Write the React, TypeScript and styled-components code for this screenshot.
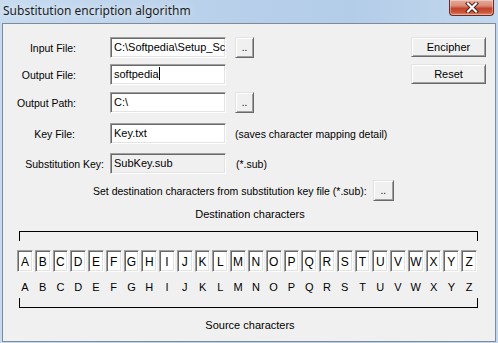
import React from "react";
import styled, { createGlobalStyle, css } from "styled-components";

const Global = createGlobalStyle`
  html, body { margin: 0; padding: 0; }
  body { width: 498px; height: 343px; overflow: hidden; background: #b9d1ea; }
  * { box-sizing: border-box; }
`;

const Window = styled.div`
  width: 498px;
  height: 343px;
  display: flex;
  flex-direction: column;
  background: linear-gradient(to right, #c7dbf0 0%, #b8d0ea 45%, #b3cce8 70%, #c3d8ee 100%);
  font-family: "Liberation Sans", Arial, sans-serif;
  color: #000;
`;

const TitleBar = styled.div`
  height: 23px;
  display: flex;
  align-items: flex-start;
  justify-content: space-between;
  padding: 0 4px 0 3px;
`;

const TitleText = styled.div`
  font-family: "Noto Sans", "Open Sans", sans-serif;
  font-size: 12px;
  line-height: 20px;
  color: #1e1e1e;
  padding-top: 1px;
  text-shadow: 0 0 8px rgba(255, 255, 255, 0.9);
`;

const CloseButton = styled.div`
  width: 45px;
  height: 16px;
  border: 1px solid #6d2a20;
  border-top: none;
  border-radius: 0 0 4px 4px;
  background: linear-gradient(to bottom, #e7ab9c 0%, #d88a76 40%, #c4432b 55%, #c8533a 80%, #dd8b6f 100%);
  box-shadow: inset 0 0 0 1px rgba(255, 255, 255, 0.35);
  display: flex;
  align-items: center;
  justify-content: center;
`;

const Client = styled.div`
  flex: 1;
  margin: 0 2px 1px 2px;
  border: 1px solid #7f8b98;
  background: #f0f0f0;
  display: flex;
  flex-direction: column;
  font-size: 10.5px;
`;

const TopSection = styled.div`
  display: flex;
  padding-top: 13px;
`;

const FormColumn = styled.div`
  display: flex;
  flex-direction: column;
`;

const Row = styled.div<{ $gap: number }>`
  display: flex;
  align-items: center;
  height: 21px;
  margin-top: ${(p) => p.$gap}px;
`;

const Label = styled.div<{ $pr: number }>`
  width: 107px;
  text-align: right;
  padding-right: ${(p) => p.$pr}px;
  white-space: nowrap;
`;

const sunken = css`
  border-style: solid;
  border-width: 1px;
  border-color: #a0a0a0 #ffffff #ffffff #a0a0a0;
  box-shadow: inset 1px 1px 0 #696969, inset -1px -1px 0 #e3e3e3;
`;

const raised = css`
  border-style: solid;
  border-width: 1px;
  border-color: #e3e3e3 #696969 #696969 #e3e3e3;
  box-shadow: inset 1px 1px 0 #ffffff, inset -1px -1px 0 #a0a0a0;
  background: #f0f0f0;
`;

const TextBox = styled.div<{ $disabled?: boolean }>`
  ${sunken};
  width: 116px;
  height: 21px;
  background: ${(p) => (p.$disabled ? "#f0f0f0" : "#ffffff")};
  font-size: 11px;
  line-height: 17px;
  padding: 1px 0 0 3px;
  white-space: nowrap;
  overflow: hidden;
`;

const Caret = styled.span`
  display: inline-block;
  width: 1px;
  height: 13px;
  background: #000;
  vertical-align: -2px;
`;

const DotButton = styled.div<{ $ml: number }>`
  ${raised};
  width: 19px;
  height: 21px;
  margin-left: ${(p) => p.$ml}px;
  display: flex;
  align-items: flex-end;
  justify-content: center;
  font-size: 10px;
  line-height: 14px;
  padding-bottom: 2px;
`;

const Note = styled.div<{ $ml: number }>`
  margin-left: ${(p) => p.$ml}px;
  white-space: nowrap;
`;

const ButtonColumn = styled.div`
  margin-left: auto;
  margin-right: 9px;
  display: flex;
  flex-direction: column;
  gap: 7px;
`;

const PushButton = styled.div`
  ${raised};
  width: 75px;
  height: 20px;
  display: flex;
  align-items: center;
  justify-content: center;
  font-size: 11px;
`;

const SetRow = styled.div`
  display: flex;
  align-items: center;
  height: 21px;
  margin-top: 6px;
  padding-left: 90px;
  gap: 6px;
`;

const SetButton = styled(DotButton)`
  width: 21px;
`;

const Caption = styled.div<{ $gap: number }>`
  text-align: center;
  line-height: 14px;
  height: 14px;
  margin-top: ${(p) => p.$gap}px;
  font-size: 11px;
  padding-left: 2px;
`;

const Bracket = styled.div<{ $open: "top" | "bottom"; $gap: number }>`
  margin-left: 16px;
  width: 459px;
  height: 10px;
  margin-top: ${(p) => p.$gap}px;
  border-left: 1px solid #000;
  border-right: 1px solid #000;
  ${(p) => (p.$open === "top" ? "border-top: 1px solid #000;" : "border-bottom: 1px solid #000;")}
`;

const LetterGrid = styled.div<{ $gap: number; $h: number }>`
  margin-left: 14px;
  width: 460px;
  height: ${(p) => p.$h}px;
  margin-top: ${(p) => p.$gap}px;
  display: grid;
  grid-template-columns: repeat(26, 1fr);
  column-gap: 2px;
`;

const LetterBox = styled.div`
  ${sunken};
  background: #ffffff;
  display: flex;
  align-items: center;
  justify-content: center;
  font-size: 12px;
  padding-top: 1px;
`;

const SourceLetter = styled.div`
  text-align: center;
  font-size: 11px;
  line-height: 14px;
`;

const letters = "ABCDEFGHIJKLMNOPQRSTUVWXYZ".split("");

const rows = [
  { label: "Input File:", pr: 34, gap: 0, value: "C:\\Softpedia\\Setup_Sc", extra: "dots" },
  { label: "Output File:", pr: 34, gap: 6, value: "softpedia", caret: true },
  { label: "Output Path:", pr: 34, gap: 7, value: "C:\\", extra: "dots" },
  { label: "Key File:", pr: 35, gap: 10, value: "Key.txt", extra: "note", note: "(saves character mapping detail)", ml: 9 },
  { label: "Substitution Key:", pr: 6, gap: 9, value: "SubKey.sub", disabled: true, extra: "note", note: "(*.sub)", ml: 10 },
];

export default function App() {
  return (
    <>
      <Global />
      <Window>
        <TitleBar>
          <TitleText>Substitution encription algorithm</TitleText>
          <CloseButton>
            <svg width="14" height="11" viewBox="0 0 14 11">
              <path d="M3 1.5 L11 9.5 M11 1.5 L3 9.5" stroke="#4a1a12" strokeWidth="4" strokeLinecap="square" />
              <path d="M3 1.5 L11 9.5 M11 1.5 L3 9.5" stroke="#ffffff" strokeWidth="2.2" strokeLinecap="square" />
            </svg>
          </CloseButton>
        </TitleBar>
        <Client>
          <TopSection>
            <FormColumn>
              {rows.map((r) => (
                <Row key={r.label} $gap={r.gap}>
                  <Label $pr={r.pr}>{r.label}</Label>
                  <TextBox $disabled={r.disabled}>
                    {r.value}
                    {r.caret && <Caret />}
                  </TextBox>
                  {r.extra === "dots" && <DotButton $ml={9}>..</DotButton>}
                  {r.extra === "note" && <Note $ml={r.ml ?? 9}>{r.note}</Note>}
                </Row>
              ))}
            </FormColumn>
            <ButtonColumn>
              <PushButton>Encipher</PushButton>
              <PushButton>Reset</PushButton>
            </ButtonColumn>
          </TopSection>
          <SetRow>
            <span>Set destination characters from substitution key file (*.sub):</span>
            <SetButton $ml={0}>..</SetButton>
          </SetRow>
          <Caption $gap={6}>Destination characters</Caption>
          <Bracket $open="top" $gap={10} />
          <LetterGrid $gap={9} $h={22}>
            {letters.map((l) => (
              <LetterBox key={l}>{l}</LetterBox>
            ))}
          </LetterGrid>
          <LetterGrid $gap={8} $h={14}>
            {letters.map((l) => (
              <SourceLetter key={l}>{l}</SourceLetter>
            ))}
          </LetterGrid>
          <Bracket $open="bottom" $gap={4} />
          <Caption $gap={10}>Source characters</Caption>
        </Client>
      </Window>
    </>
  );
}
